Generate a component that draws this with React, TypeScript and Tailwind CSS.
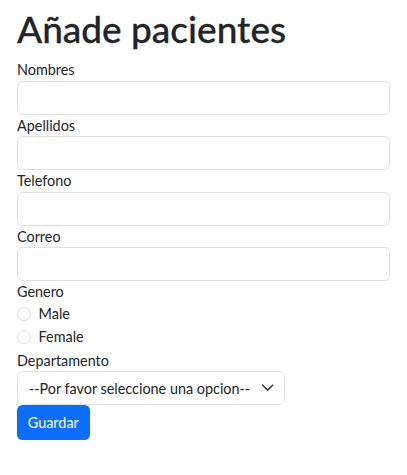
import React from 'react'

const font = { fontFamily: 'Lato, "Noto Sans", "Liberation Sans", sans-serif' }

function Field({ label, type = 'text' }: { label: string; type?: string }) {
  return (
    <div>
      <label className="block text-[14.4px] leading-[21.6px]">{label}</label>
      <input
        type={type}
        className="block w-full h-[34px] rounded-[5.4px] border border-[#dee2e6] bg-white px-[10.8px] text-[14.4px] outline-none"
      />
    </div>
  )
}

function Radio({ label }: { label: string }) {
  return (
    <div className="flex items-start min-h-[21.6px] mb-[1.8px]">
      <input
        type="radio"
        name="genero"
        className="appearance-none w-[14.4px] h-[14.4px] mt-[3.6px] rounded-full border border-[#dcdcdc] bg-white shrink-0"
      />
      <label className="ml-[7.2px] text-[14.4px] leading-[21.6px]">{label}</label>
    </div>
  )
}

export default function App() {
  return (
    <div className="bg-white text-[#212529] px-[17px] pt-[6px] min-h-[475px]" style={font}>
      <h1 className="text-[37px] leading-[46px] font-medium mb-[7px] [-webkit-text-stroke:0.3px_#212529]">Añade pacientes</h1>
      <form>
        <Field label="Nombres" />
        <Field label="Apellidos" />
        <Field label="Telefono" type="tel" />
        <Field label="Correo" type="email" />
        <label className="block text-[14.4px] leading-[21.6px]">Genero</label>
        <Radio label="Male" />
        <Radio label="Female" />
        <label className="block text-[14.4px] leading-[21.6px]">Departamento</label>
        <div className="relative w-fit">
          <select className="block appearance-none h-[34px] rounded-[5.4px] border border-[#dee2e6] bg-white pl-[10.8px] pr-[32.4px] text-[14.4px] text-[#212529] outline-none">
            <option>--Por favor seleccione una opcion--</option>
            <option>Cardiología</option>
            <option>Pediatría</option>
          </select>
          <svg
            className="pointer-events-none absolute right-[11px] top-[10px]"
            width="13.3"
            height="13.3"
            viewBox="0 0 16 16"
          >
            <path d="m2 5 6 6 6-6" fill="none" stroke="#343a40" strokeWidth="1.8" strokeLinecap="round" strokeLinejoin="round" />
          </svg>
        </div>
        <button
          type="submit"
          className="h-[34.5px] px-[10.8px] rounded-[5.4px] bg-[#0d6efd] text-white text-[14.4px] leading-[21.6px]"
        >
          Guardar
        </button>
      </form>
    </div>
  )
}
